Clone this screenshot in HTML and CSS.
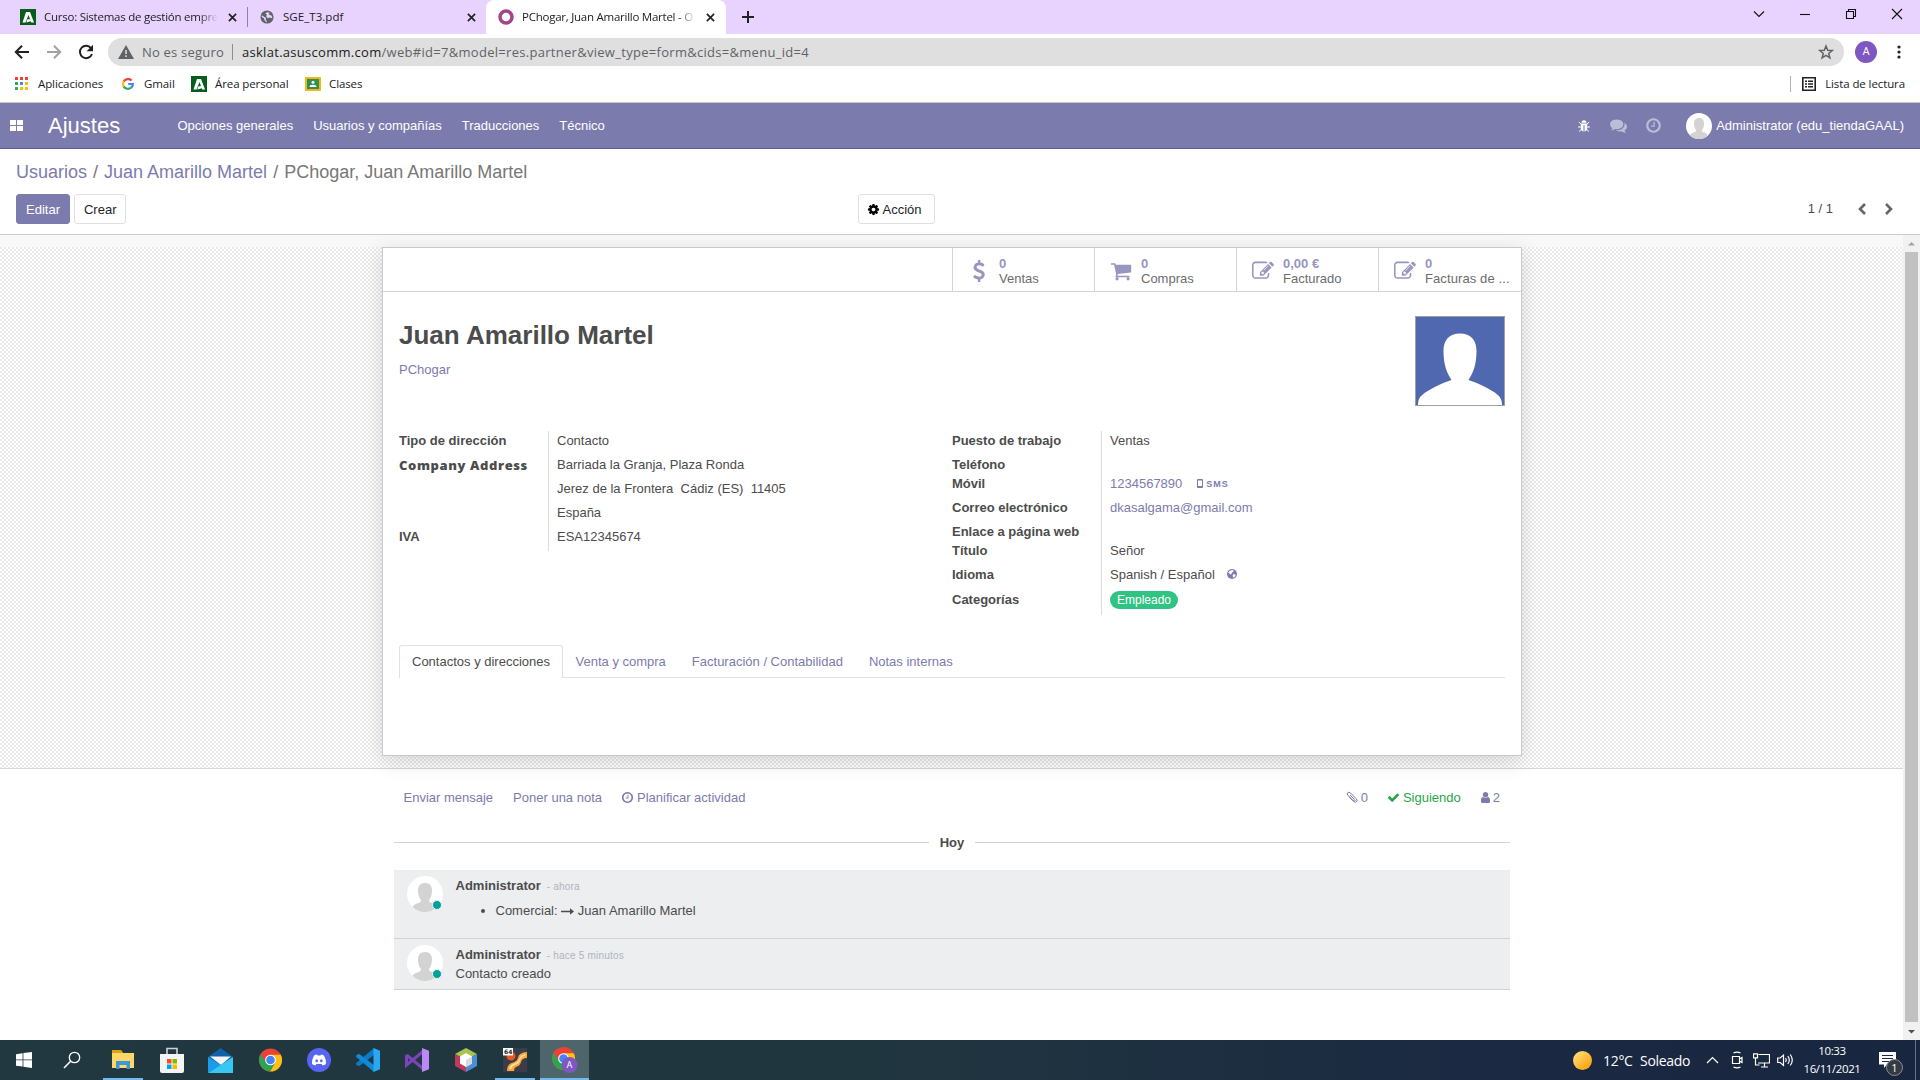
FILE: index.html
```html
<!DOCTYPE html>
<html lang="es">
<head>
<meta charset="utf-8">
<title>PChogar, Juan Amarillo Martel - Odoo</title>
<link rel="stylesheet" href="styles.css">
</head>
<body>
<svg class="defs" width="0" height="0">
  <symbol id="x" viewBox="0 0 10 10"><path d="M1 1l8 8M9 1l-8 8" stroke="#202124" stroke-width="1.9" fill="none"/></symbol>
  <symbol id="junta" viewBox="0 0 16 16"><path fill="#085d1c" d="M0 0h16v16H0z"/><path fill="#fff" d="M6 3h4l4 10.500h-2.800L8.500 6 5.500 13.500H2.500z"/><path fill="#fff" d="M7 10.500l3.500-.5 1 2-5 1.500z"/></symbol>
  <symbol id="globe" viewBox="0 0 16 16"><circle cx="8" cy="8" r="7.500" fill="#5f6368"/><path fill="#e8d3ff" d="M8 2.500l3 .5-1 2 3.500 1.500.5 3-3-1-2 1-2-2.500 1-2-2-1zM2 6l3 2 2 1-.5 2 1.500 2-1 1-2-2.500-.5-2L2 8z"/></symbol>
  <symbol id="clock" viewBox="0 0 1792 1792"><path d="M1024 544v448q0 14-9 23t-23 9h-320q-14 0-23-9t-9-23v-64q0-14 9-23t23-9h224v-352q0-14 9-23t23-9h64q14 0 23 9t9 23zm416 352q0-148-73-273t-198-198-273-73-273 73-198 198-73 273 73 273 198 198 273 73 273-73 198-198 73-273zm224 0q0 209-103 385.500t-279.500 279.500-385.500 103-385.500-103-279.500-279.500-103-385.500 103-385.500 279.500-279.500 385.500-103 385.500 103 279.500 279.500 103 385.500z"/></symbol>
  <symbol id="edit" viewBox="0 0 1792 1792"><path d="M888 1184l116-116-152-152-116 116v56h96v96h56zm440-720q-16-16-33 1l-350 350q-17 17-1 33t33-1l350-350q17-17 1-33zm80 594v190q0 119-84.500 203.500t-203.500 84.500h-832q-119 0-203.500-84.500t-84.500-203.500v-832q0-119 84.500-203.500t203.500-84.500h832q63 0 117 25 15 7 18 23 3 17-9 29l-49 49q-14 14-32 8-23-6-45-6h-832q-66 0-113 47t-47 113v832q0 66 47 113t113 47h832q66 0 113-47t47-113v-126q0-13 9-22l64-64q15-15 35-7t20 29zm-96-738l288 288-672 672h-288v-288zm444 132l-92 92-288-288 92-92q28-28 68-28t68 28l152 152q28 28 28 68t-28 68z"/></symbol>
  <symbol id="person" viewBox="0 0 36 36"><circle cx="18" cy="18" r="18" fill="#fff"/><path fill="#d3d3d3" d="M18 7c5 0 7.200 3.500 7 8-.2 4.500-1.500 7-3 9 0 2 1 2.500 4 3.500 2.500 1 3.500 2 4 3.500C26 35 22 36 18 36S10 35 5.500 31c.8-1.500 2-2.500 4.500-3.500 3-1 4-1.500 4-3.500-1.500-2-2.800-4.500-3-9-.2-4.500 2-8 7-8z"/></symbol>
  <symbol id="chrome" viewBox="0 0 24 24"><circle cx="12" cy="12" r="12" fill="#ea4335"/><path fill="#fbc116" d="M12 6.500h10.700A12 12 0 0 1 11.500 24l5-9z"/><path fill="#2da44e" d="M1.700 6A12 12 0 0 0 11.500 24l5.200-8.800-9.500-.4z"/><circle cx="12" cy="12" r="5.600" fill="#fff"/><circle cx="12" cy="12" r="4.500" fill="#4285f4"/></symbol>
</svg>

<header class="tabstrip">
  <div class="tab t1"><svg class="fav"><use href="#junta"/></svg><span class="tabname fade">Curso: Sistemas de gestión empre</span><svg class="close"><use href="#x"/></svg></div>
  <i class="tabsep"></i>
  <div class="tab t2"><svg class="fav small"><use href="#globe"/></svg><span class="tabname pdf">SGE_T3.pdf</span><svg class="close"><use href="#x"/></svg></div>
  <div class="tab t3"><svg class="fav" viewBox="0 0 16 16"><circle cx="8" cy="8" r="6" fill="none" stroke="#a24689" stroke-width="3.500"/></svg><span class="tabname fade">PChogar, Juan Amarillo Martel - O</span><svg class="close"><use href="#x"/></svg></div>
  <svg class="plus" viewBox="0 0 12 12"><path d="M6 0v12M0 6h12" stroke="#202124" stroke-width="2"/></svg>
  <div class="winbtns">
    <svg width="12" height="12" viewBox="0 0 12 12"><path d="M1 3.500l5 5 5-5"/></svg>
    <svg width="12" height="12" viewBox="0 0 12 12"><path d="M1 6.500h10"/></svg>
    <svg width="12" height="12" viewBox="0 0 12 12"><path d="M1.500 3.500h7v7h-7zM3.500 3.500v-2h7v7h-2"/></svg>
    <svg width="12" height="12" viewBox="0 0 12 12"><path d="M1 1l10 10M11 1L1 11"/></svg>
  </div>
</header>

<div class="toolbar">
  <svg class="nav" viewBox="0 0 16 16"><path d="M15 8H2M8 1.800L1.800 8 8 14.200" stroke="#202124"/></svg>
  <svg class="nav" viewBox="0 0 16 16"><path d="M1 8h13M8 1.800L14.200 8 8 14.200" stroke="#a0a1a4"/></svg>
  <svg class="nav" viewBox="0 0 16 16"><path d="M13.300 4.500A6.200 6.200 0 1 0 14 10" stroke="#202124"/><path d="M15 .8v6.400H8.600z" fill="#202124"/></svg>
  <div class="omni">
    <svg width="16" height="14" viewBox="0 0 16 14"><path fill="#5f6368" d="M8 0l8 14H0z"/><path stroke="#dfdfdf" stroke-width="1.500" d="M8 5v4M8 10.300v1.700"/></svg>
    <span class="unsafe">No es seguro</span><i></i>
    <span class="url"><b>asklat.asuscomm.com</b>/web#id=7&amp;model=res.partner&amp;view_type=form&amp;cids=&amp;menu_id=4</span>
    <svg class="star" width="16" height="16" viewBox="0 0 16 16"><path fill="none" stroke="#5f6368" stroke-width="1.500" d="M8 2l1.700 4.200 4.500.3-3.500 2.900 1.200 4.400L8 11.300l-3.900 2.500 1.200-4.400L1.800 6.500l4.500-.3z"/></svg>
  </div>
  <div class="profile">A</div>
  <svg class="dots" width="4" height="14" viewBox="0 0 4 14"><circle cx="2" cy="2" r="1.600"/><circle cx="2" cy="7" r="1.600"/><circle cx="2" cy="12" r="1.600"/></svg>
</div>

<div class="bookmarks">
  <svg class="bi apps" viewBox="0 0 13 13"><path fill="#ea4335" d="M0 0h3v3H0zM5 0h3v3H5zM10 0h3v3h-3z"/><path fill="#34a853" d="M0 5h3v3H0zM0 10h3v3H0z"/><path fill="#4285f4" d="M5 5h3v3H5z"/><path fill="#fbbc05" d="M10 5h3v3h-3zM5 10h3v3H5zM10 10h3v3h-3z"/></svg>
  <span class="b1">Aplicaciones</span>
  <svg class="bi goog" viewBox="0 0 12 12"><g fill="none" stroke-width="2.200"><path stroke="#ea4335" d="M1.700 3.600A4.900 4.900 0 0 1 9.600 2.600"/><path stroke="#fbbc05" d="M1.700 3.600a4.900 4.900 0 0 0 0 4.800"/><path stroke="#34a853" d="M1.700 8.400a4.900 4.900 0 0 0 7.400 1.300"/><path stroke="#4285f4" d="M9.100 9.700A4.900 4.900 0 0 0 10.900 6H6.200"/></g></svg>
  <span class="b2">Gmail</span>
  <svg class="bi"><use href="#junta"/></svg>
  <span class="b3">Área personal</span>
  <svg class="bi" viewBox="0 0 16 16"><rect y="1" width="16" height="14" rx="1" fill="#f2b810"/><path fill="#2f8f57" d="M2 3h12v10H2z"/><circle cx="8" cy="6.300" r="1.500" fill="#fff"/><path fill="#fff" d="M4.500 11q0-2.300 3.500-2.300t3.500 2.300z"/></svg>
  <span class="b4">Clases</span>
  <div class="reading"><svg width="14" height="14" viewBox="0 0 14 14"><path fill="none" stroke="#202124" stroke-width="1.600" d="M.8.800h12.400v12.400H.8z"/><path stroke="#202124" stroke-width="1.400" d="M3 4.200h2M6 4.200h5M3 7h2M6 7h5M3 9.800h2M6 9.800h5"/></svg><span>Lista de lectura</span></div>
</div>

<nav class="navbar">
  <svg class="grid" width="13" height="11" viewBox="0 0 13 11"><path fill="#fff" d="M0 0h6v5H0zM7 0h6v5H7zM0 6h6v5H0zM7 6h6v5H7z"/></svg>
  <span class="brand">Ajustes</span>
  <ul><li>Opciones generales</li><li>Usuarios y compañías</li><li>Traducciones</li><li>Técnico</li></ul>
  <div class="systray">
    <svg class="bug" width="12" height="12" viewBox="0 0 12 12"><path fill="#fff" d="M3.500 2.800a2.500 2.500 0 0 1 5 0zM2.800 3.500h6.400v4.800Q9 11.500 6 11.500T2.800 8.300z"/><path fill="none" stroke="#fff" d="M0 7h12M.8 2l2.500 2.300M11.200 2L8.700 4.300M1 11.500l2.500-2.300M11 11.500L8.500 9.200"/><path d="M6 5v6.500" stroke="#7c7bad"/></svg>
    <svg class="dim" width="17" height="17" viewBox="0 0 1792 1792"><path d="M1408 768q0 139-94 257t-256.500 186.500-353.500 68.500q-86 0-176-16-124 88-278 128-36 9-86 16h-3q-11 0-20.500-8t-11.500-21q-1-3-1-6.500t.5-6.500 2-6l2.500-5 3.500-5.500 4-5 4.500-5 4-4.500q5-6 23-25t26-29.500 22.500-29 25-38.500 20.500-44q-124-72-195-177t-71-224q0-139 94-257t256.500-186.500 353.500-68.500 353.500 68.500 256.500 186.500 94 257zm384 256q0 120-71 224.500t-195 176.500q10 24 20.500 44t25 38.500 22.500 29 26 29.500 23 25q1 1 4 4.500t4.500 5 4 5 3.500 5.500l2.500 5 2 6 .5 6.500-1 6.500q-3 14-13 22t-22 7q-50-7-86-16-154-40-278-128-90 16-176 16-271 0-472-132 58 4 88 4 161 0 309-45t264-129q125-92 192-212t67-254q0-77-23-152 129 71 204 178t75 230z"/></svg>
    <svg class="dim" width="17" height="17"><use href="#clock"/></svg>
    <svg class="me" width="26" height="26"><use href="#person"/></svg>
    <span>Administrator (edu_tiendaGAAL)</span>
  </div>
</nav>

<div class="control">
  <div class="crumbs"><a>Usuarios</a><i>/</i><a>Juan Amarillo Martel</a><i>/</i><span>PChogar, Juan Amarillo Martel</span></div>
  <div class="actions">
    <button class="btn primary">Editar</button><button class="btn">Crear</button>
    <button class="btn action"><svg width="13" height="13" viewBox="0 0 1792 1792"><path d="M1152 896q0-106-75-181t-181-75-181 75-75 181 75 181 181 75 181-75 75-181zm512-109v222q0 12-8 23t-20 13l-185 28q-19 54-39 91 35 50 107 138 10 12 10 25t-9 23q-27 37-99 108t-94 71q-12 0-26-9l-138-108q-44 23-91 38-16 136-29 186-7 28-36 28h-222q-14 0-24.500-8.500t-11.500-21.500l-28-184q-49-16-90-37l-141 107q-10 9-25 9-14 0-25-11-126-114-165-168-7-10-7-23 0-12 8-23 15-21 51-66.500t54-70.500q-27-50-41-99l-183-27q-13-2-21-12.500t-8-23.500v-222q0-12 8-23t19-13l186-28q14-46 39-92-40-57-107-138-10-12-10-24 0-10 9-23 26-36 98.500-107.500t94.500-71.500q13 0 26 10l138 107q44-23 91-38 16-136 29-186 7-28 36-28h222q14 0 24.500 8.500t11.500 21.500l28 184q49 16 90 37l142-107q9-9 24-9 13 0 25 10 129 119 165 170 7 8 7 22 0 12-8 23-15 21-51 66.500t-54 70.500q26 50 41 98l183 28q13 2 21 12.500t8 23.500z"/></svg>Acción</button>
    <div class="pager"><span>1 / 1</span><svg viewBox="0 0 10 12"><path d="M8 1L3 6l5 5"/></svg><svg viewBox="0 0 10 12"><path d="M2 1l5 5-5 5"/></svg></div>
  </div>
</div>

<div class="content">
  <main>
    <div class="sheetbg">
      <section class="sheet">
        <div class="stats">
          <div class="stat"><svg viewBox="0 0 1792 1792"><path d="M1362 1185q0 153-99.500 263.500t-258.500 136.500v175q0 14-9 23t-23 9h-135q-13 0-22.500-9.500t-9.500-22.500v-175q-66-9-127.500-31t-101.500-44.500-74-48-46.500-37.500-17.500-18q-17-21-2-41l103-135q7-10 23-12 15-2 24 9l2 2q113 99 243 125 37 8 74 8 81 0 142.500-43t61.500-122q0-28-15-53t-33.500-42-58.500-37.500-66-32-80-32.500q-39-16-61.500-25t-61.500-26.500-62.500-31-56.500-35.500-53.500-42.500-43.500-49-35.500-58-21-66.500-8.500-78q0-138 98-242t255-134v-180q0-13 9.500-22.500t22.500-9.500h135q14 0 23 9t9 23v176q57 6 110.500 23t87 33.500 63.500 37.500 39 29 15 14q17 18 5 38l-81 146q-8 15-23 16-14 3-27-7-3-3-14.500-12t-39-26.500-58.500-32-74.500-26-85.500-11.500q-95 0-155 43t-60 111q0 26 8.500 48t29.500 41.500 39.500 33 56 31 60.500 27 70 27.500q53 20 81 31.500t76 35 75.500 42.500 62 50 53 63.500 31.500 76.500 13 94z"/></svg><p><b>0</b><span>Ventas</span></p></div>
          <div class="stat"><svg viewBox="0 0 1792 1792"><path d="M704 1536q0 52-38 90t-90 38-90-38-38-90 38-90 90-38 90 38 38 90zm896 0q0 52-38 90t-90 38-90-38-38-90 38-90 90-38 90 38 38 90zm128-1088v512q0 24-16.500 42.500t-40.500 21.500l-1044 122q13 60 13 70 0 16-24 64h920q26 0 45 19t19 45-19 45-45 19h-1024q-26 0-45-19t-19-45q0-11 8-31.500t16-36 21.500-40 15.500-29.500l-177-823h-204q-26 0-45-19t-19-45 19-45 45-19h256q16 0 28.500 6.500t19.500 15.500 13 24.500 8 26 5.500 29.500 4.500 26h1201q26 0 45 19t19 45z"/></svg><p><b>0</b><span>Compras</span></p></div>
          <div class="stat"><svg><use href="#edit"/></svg><p><b>0,00 €</b><span>Facturado</span></p></div>
          <div class="stat last"><svg><use href="#edit"/></svg><p><b>0</b><span>Facturas de ...</span></p></div>
        </div>
        <div class="head">
          <div><h1>Juan Amarillo Martel</h1><a>PChogar</a></div>
          <svg class="photo" viewBox="0 0 88 88"><path fill="#4f68b0" d="M0 0h88v88H0z"/><path fill="#fff" d="M44 16.500c11 0 16.500 6.500 16.500 17.500 0 14-3.500 22-8 29C62 66 70 70 78 75c6 4 8 7 8 13H2c0-6 2-9 8-13 8-5 16-9 25.500-12-4.500-7-8-15-8-29 0-11 5.500-17.500 16.500-17.500z"/></svg>
        </div>
        <div class="groups">
          <div class="group g1">
            <div class="labels"><b>Tipo de dirección</b><b class="co">Company Address</b><b>IVA</b></div>
            <div class="values"><span>Contacto</span><span>Barriada la Granja, Plaza Ronda</span><span>Jerez de la Frontera&nbsp; Cádiz (ES)&nbsp; 11405</span><span>España</span><span>ESA12345674</span></div>
          </div>
          <div class="group g2">
            <div class="labels"><b>Puesto de trabajo</b><b class="short">Teléfono</b><b>Móvil</b><b>Correo electrónico</b><b class="short">Enlace a página web</b><b>Título</b><b class="lang">Idioma</b><b>Categorías</b></div>
            <div class="values"><span>Ventas</span><span class="short"></span><span class="phone"><a>1234567890</a><svg class="mob" width="6" height="9" viewBox="0 0 6 9"><path fill="none" stroke="#7c7bad" d="M.5.500h5v8h-5z"/><path stroke="#7c7bad" d="M1 1h4M1 7.500h4"/></svg><a class="sms">SMS</a></span><span><a>dkasalgama@gmail.com</a></span><span class="short"></span><span>Señor</span><span class="lang">Spanish / Español<svg class="glb" width="10" height="10" viewBox="0 0 16 16"><circle cx="8" cy="8" r="8" fill="#7c7bad"/><path fill="#fff" d="M8 1.500l3 1-1 1.500L8 6 6 9 4 7 2 6l2-3zM10 8l4 1-1 3-3 2-1-3z"/></svg></span><span><em class="tag">Empleado</em></span></div>
          </div>
        </div>
        <div class="tabs"><span class="on">Contactos y direcciones</span><span>Venta y compra</span><span>Facturación / Contabilidad</span><span>Notas internas</span></div>
      </section>
    </div>
    <section class="chatter">
      <div class="topbar"><a class="c1">Enviar mensaje</a><a class="c2">Poner una nota</a><a class="c3"><svg width="13" height="13"><use href="#clock"/></svg>Planificar actividad</a>
        <div class="follow"><a><svg width="12" height="12" viewBox="0 0 12 12"><path fill="none" stroke="#7c7bad" stroke-width="1" d="M4 4l4.500 4.500q1 .8.300 1.500t-1.500-.3L2 4.400Q.6 2.800 1.700 1.700t2.700.2l5.800 5.800q1.600 1.800.4 3t-3-.3L3 5.800"/></svg>0</a><a class="ok"><svg width="13" height="13" viewBox="0 0 1792 1792"><path d="M1671 566q0 40-28 68l-724 724-136 136q-28 28-68 28t-68-28l-136-136-362-362q-28-28-28-68t28-68l136-136q28-28 68-28t68 28l294 295 656-657q28-28 68-28t68 28l136 136q28 28 28 68z"/></svg>Siguiendo</a><a><svg class="usr" width="13" height="13" viewBox="128 0 1536 1792"><path d="M1536 1399q0 109-62.500 187t-150.500 78h-854q-88 0-150.500-78t-62.500-187q0-85 8.500-160.500t31.500-152 58.500-131 94-89 134.500-34.500q131 128 313 128t313-128q76 0 134.500 34.500t94 89 58.500 131 31.500 152 8.500 160.500zm-256-887q0 159-112.500 271.500t-271.500 112.500-271.500-112.500-112.500-271.500 112.500-271.500 271.500-112.500 271.500 112.500 112.500 271.500z"/></svg>2</a></div>
      </div>
      <div class="day">Hoy</div>
      <article class="msg m1">
        <div class="av"><svg width="36" height="36"><use href="#person"/></svg><i></i></div>
        <div><p><b>Administrator</b><small>- ahora</small></p><ul><li>Comercial: <svg width="13" height="7" viewBox="0 0 13 7"><path d="M0 2.800h9V.3L13 3.500 9 6.700V4.200H0z" fill="#4c4c4c"/></svg> Juan Amarillo Martel</li></ul></div>
      </article>
      <article class="msg m2">
        <div class="av"><svg width="36" height="36"><use href="#person"/></svg><i></i></div>
        <div><p><b>Administrator</b><small>- hace 5 minutos</small></p><p class="txt">Contacto creado</p></div>
      </article>
    </section>
  </main>
  <aside class="scroll"><svg viewBox="0 0 17 17"><path fill="#a3a3a3" d="M5 10.500h7L8.500 7z"/></svg><div></div><svg viewBox="0 0 17 17"><path fill="#505050" d="M5 7h7l-3.500 3.500z"/></svg></aside>
</div>

<footer class="taskbar">
  <div class="app start"><svg width="16" height="16" viewBox="0 0 16 16"><path fill="#fff" d="M0 2.200L6.600 1.200v6.300H0zM7.400 1.100L16 0v7.500H7.400zM0 8.300h6.600v6.300L0 13.700zM7.400 8.300H16V16l-8.600-1.200z"/></svg></div>
  <div class="app find"><svg width="18" height="18" viewBox="0 0 18 18"><circle cx="11.500" cy="6.500" r="5.200" fill="none" stroke="#fff" stroke-width="1.300"/><path d="M7.600 10.300L1 17" stroke="#fff" stroke-width="1.500"/></svg></div>
  <div class="app run"><svg width="22" height="20" viewBox="0 0 22 20"><path fill="#e0a115" d="M0 0h9l2 2.500V6H0z"/><path fill="#ffd767" d="M0 3h22v15H0z"/><path fill="#3a96dd" d="M4 11h14v8h-3.500v-4h-7v4H4z"/></svg></div>
  <div class="app"><svg width="24" height="26" viewBox="0 0 24 26"><path d="M7 7V1.500h10V7" fill="none" stroke="#cfd3d5" stroke-width="1.600"/><path fill="#f4f4f4" d="M0 7h24v17q0 2-2 2H2q-2 0-2-2z"/><path fill="#f25022" d="M7 12h4.500v4.500H7z"/><path fill="#7fba00" d="M12.500 12H17v4.500h-4.500z"/><path fill="#00a4ef" d="M7 17.500h4.500V22H7z"/><path fill="#ffb900" d="M12.500 17.500H17V22h-4.500z"/></svg></div>
  <div class="app"><svg width="25" height="25" viewBox="0 0 25 25"><path fill="#0d62ab" d="M0 9L12.500 0 25 9v8H0z"/><path fill="#f5f5f5" d="M2 8.500h21L13 17z"/><path fill="#1c9ce8" d="M0 9l13 8-13 8z"/><path fill="#38c7f3" d="M25 9v16H0z"/></svg></div>
  <div class="app"><svg width="23" height="26"><use href="#chrome"/></svg></div>
  <div class="app"><svg width="24" height="24" viewBox="0 0 24 24"><circle cx="12" cy="12" r="12" fill="#5865f2"/><path fill="#fff" d="M7 7.500Q9 6.500 10 6.500l.6 1h2.800l.6-1q1 0 3 1Q19.500 12 19 16q-1.700 1.300-3.500 1.500l-.8-1.500H9.300l-.8 1.500Q6.700 17.300 5 16q-.5-4 2-8.500z"/><ellipse cx="9.700" cy="12.800" rx="1.300" ry="1.500" fill="#5865f2"/><ellipse cx="14.300" cy="12.800" rx="1.300" ry="1.500" fill="#5865f2"/></svg></div>
  <div class="app"><svg width="24" height="24" viewBox="0 0 24 24"><path fill="#0a7bc9" d="M18 0v7L3 18.300 0 16.500v-1.200z"/><path fill="#0e8ad8" d="M18 24v-7L3 5.700 0 7.500v1.200z"/><path fill="#2aa9f2" d="M17.500 0L24 2.800v18.400L17.500 24z"/></svg></div>
  <div class="app"><svg width="24" height="24" viewBox="0 0 24 24"><path fill="none" stroke="#7a45b8" stroke-width="3" d="M1.500 7v10L18 3.500M1.500 7L18 20.500"/><path fill="#b98af5" d="M17 0l7 2.800v18.400L17 24z"/></svg></div>
  <div class="app"><svg width="22" height="24" viewBox="0 0 22 24"><path fill="#a8c64b" d="M11 0l11 6-11 6L0 6z"/><path fill="#c0395b" d="M0 6l11 6v12L0 18z"/><path fill="#4a8fd6" d="M22 6l-11 6v12l11-6z"/><path fill="#fff" d="M11 5l6 3.500v7L11 19l-6-3.500v-7z"/><path fill="#d6dadc" d="M11 12l6-3.500v7L11 19z"/></svg></div>
  <div class="app run"><svg width="24" height="24" viewBox="0 0 24 24"><path fill="#3a3d47" d="M0 0h24v24H0z"/><circle cx="8" cy="8" r="4.500" fill="#e8571c"/><path fill="#ffa53a" d="M4 23q0-7 6-8.500 4-1 5-5 1-5 9-5.500v6q-5 0-6 4-1 4-5 5-2 .7-2 4z"/><path fill="#ffe0a0" d="M6 21q1-4.500 5-5.500 4-1 5.500-5.500 1-3 6-4v1.500q-4 1-5 4-1.500 4.500-5.500 5.500-3 1-3.500 4z"/><path fill="#fff" d="M0 0h10v7.500H0z"/><text x="1" y="6" class="badge64">64</text></svg></div>
  <div class="app run current"><svg width="26" height="26" viewBox="0 0 26 26"><use href="#chrome" width="23" height="23" x="0" y="0"/><circle cx="17.500" cy="18" r="8" fill="#7e57c2"/><text x="17.500" y="21.300" text-anchor="middle" class="badgeA">A</text></svg></div>
  <div class="tray">
    <i class="sun"></i><span class="temp">12°C</span><span class="sol">Soleado</span>
    <svg class="up" width="13" height="8" viewBox="0 0 13 8"><path d="M1 7l5.500-5.500L12 7"/></svg>
    <svg class="cam" width="12" height="18" viewBox="0 0 12 18"><path d="M1.500 5.500h7v7h-7zM8.500 8l2.500-1.500v5L8.500 10M2.500 2Q6 .2 9.500 2M2.500 16q3.500 1.800 7 0"/></svg>
    <svg class="net" width="17" height="15" viewBox="0 0 17 15"><path d="M5.500 1.500h11v8.500H5M8 14h7M11.500 10v4M.5.800h4v4h-4zM2.500 5v7h4"/></svg>
    <svg class="vol" width="17" height="14" viewBox="0 0 17 14"><path d="M.7 5h2.500L6.500 2v10.500L3.200 9.500H.7zM8.500 5q1.500 2 0 4M10.800 3.200q3 4 0 7.800M13.200 1.500q4.200 5.500 0 11"/></svg>
    <div class="time"><span>10:33</span><span>16/11/2021</span></div>
    <div class="note"><svg width="17" height="16" viewBox="0 0 17 16"><path fill="#fff" d="M0 0h17v12.500H8L5 16v-3.500H0z"/><path stroke="#1a2842" d="M3 3.500h11M3 6.500h11M3 9.500h7"/></svg><b>1</b></div>
    <i class="peek"></i>
  </div>
</footer>
</body>
</html>
```
FILE: styles.css
```css
* { box-sizing: border-box; }
body { margin: 0; width: 1920px; height: 1080px; overflow: hidden; display: flex; flex-direction: column; background: #fff; font: 13px/15px "Liberation Sans", Arial, sans-serif; color: #4c4c4c; }
p, ul, h1 { margin: 0; padding: 0; }
svg { display: block; flex: none; }
.defs { position: absolute; }
a { color: #7c7bad; }

.tabstrip, .toolbar, .bookmarks { font-family: "Open Sans", "Noto Sans", sans-serif; color: #202124; flex: none; display: flex; align-items: center; }
.tabstrip { height: 34px; background: #e8d3ff; font-size: 11.5px; letter-spacing: -.25px; }
.tab { display: flex; align-items: center; height: 34px; }
.t1 { width: 247px; padding: 0 10px 0 20px; }
.t2 { width: 238px; padding: 0 10px 0 12px; }
.t3 { width: 240px; padding: 0 11px 0 12px; background: #fff; border-radius: 8px 8px 0 0; }
.fav { width: 16px; height: 16px; margin-right: 8px; }
.fav.small { width: 14px; height: 14px; margin-right: 9px; }
.tabname { flex: 1; white-space: nowrap; margin-top: -2px; }
.pdf { letter-spacing: .05px; }
.fade { flex: none; width: 175px; -webkit-mask-image: linear-gradient(90deg, #000 155px, transparent 174px); mask-image: linear-gradient(90deg, #000 155px, transparent 174px); }
.close { width: 9px; height: 9px; margin-left: auto; }
.tabsep { width: 1px; height: 20px; background: #8f819e; }
.plus { width: 12px; height: 12px; margin-left: 16px; }
.winbtns { margin-left: auto; display: flex; gap: 34px; padding: 0 17px 6px 0; }
.winbtns svg { fill: none; stroke: #111; stroke-width: 1.1; }

.toolbar { height: 35px; padding: 1px 19px 0 14px; }
.nav { width: 16px; height: 16px; margin-right: 16px; fill: none; stroke-width: 2; }
.omni { width: 1736px; height: 28px; margin-left: -2px; border-radius: 14px; background: #dfdfdf; display: flex; align-items: center; padding: 0 10px 0 10px; font-size: 13px; color: #5f6368; }
.unsafe { margin-left: 8px; width: 82px; white-space: nowrap; letter-spacing: .2px; }
.url { letter-spacing: .29px; white-space: nowrap; }
.omni i { width: 1px; height: 16px; background: #8b8d90; margin: 0 9px 0 8px; }
.omni b { font-weight: 400; color: #202124; }
.star { margin-left: auto; }
.profile { width: 22px; height: 22px; border-radius: 50%; margin-left: 11px; background: #7e57c2; color: #fff; font: 11px/22px Roboto, sans-serif; text-align: center; }
.dots { margin-left: auto; fill: #202124; }

.bookmarks { height: 34px; padding: 0 15px 4px 15px; font-size: 11.5px; letter-spacing: -.1px; border-bottom: 1px solid #c8c8c8; white-space: nowrap; }
.bi { width: 16px; height: 16px; margin-right: 8px; }
.apps { width: 13px; height: 13px; margin-right: 10px; }
.goog { width: 12px; height: 12px; margin-right: 10px; }
.b1 { width: 84px; } .b2 { width: 47px; } .b3 { width: 90px; }
.reading { margin-left: auto; padding-left: 11px; border-left: 1px solid #b5b5b5; display: flex; align-items: center; gap: 9px; height: 16px; }

.navbar { height: 46px; flex: none; background: #7c7bad; border-bottom: 1px solid #5f5e97; color: #fff; display: flex; align-items: center; padding: 0 16px 0 10px; }
.brand { font-size: 22px; line-height: 26px; margin: 0 0 0 25px; width: 129.500px; }
.navbar ul { display: flex; list-style: none; gap: 20px; }
.systray { margin-left: auto; display: flex; align-items: center; }
.dim { fill: #bebdd7; }
.bug { margin-right: 20px; }
.dim { margin-right: 18px; }
.me { margin: 0 4px 0 6px; }

.control { height: 86px; flex: none; border-bottom: 1px solid #ccc; padding: 13px 16px 0; }
.crumbs { font-size: 18px; line-height: 21px; color: #777; }
.crumbs i { font-style: normal; padding: 0 6px; }
.actions { display: flex; align-items: center; margin-top: 11px; height: 30px; }
.btn { height: 30px; border: 1px solid #dee0e3; border-radius: 3px; background: #fff; font: 13px/15px "Liberation Sans", Arial, sans-serif; color: #212529; padding: 0 9px; margin: 0 4px 0 0; }
.primary { background: #7c7bad; border-color: #7c7bad; color: #fff; }
.action { margin-left: 728px; width: 77px; display: flex; align-items: center; gap: 2px; padding: 0 8px; }
.pager { margin-left: auto; display: flex; align-items: center; padding-right: 10px; }
.pager svg { width: 10px; height: 12px; fill: none; stroke: #666; stroke-width: 2.6; margin-left: 17px; }
.pager span { margin: -2px 7px 0 0; }

.content { flex: 1; display: flex; min-height: 0; }
main { flex: 1; padding-top: 12px; background: linear-gradient(#f8f8f8 12px, #fff 12px); }
.sheetbg { height: 522px; border-bottom: 1px solid #d6d6d6; padding: 0 381px 0 382px; background: repeating-conic-gradient(#fff 0 25%, #e9e9e9 0 50%) 0 0 / 4px 4px; }
.sheet { height: 509px; border: 1px solid #c8c8d3; background: #fff; box-shadow: 0 5px 20px rgba(0,0,0,.14); }
.stats { height: 44px; border-bottom: 1px solid #d3d3dd; display: flex; justify-content: flex-end; }
.stat { width: 142px; border-left: 1px solid #d3d3dd; display: flex; align-items: center; padding: 2px 0 0 14px; color: #6c6c6c; white-space: nowrap; }
.stat.last { width: 143px; }
.stat svg { width: 24px; height: 24px; fill: #9796be; margin-right: 8px; padding: 1px; }
.stat b, .stat span { display: block; }
.stat b { color: #9796be; }
.last span { letter-spacing: .1px; }
.head { display: flex; justify-content: space-between; padding: 24px 16px 0 16px; height: 139px; }
h1 { font-size: 26px; line-height: 38px; margin-bottom: 8px; }
.photo { width: 90px; height: 90px; border: 1px solid #a0a0a0; }
.groups { display: flex; padding-left: 16px; height: 214px; line-height: 20px; align-items: flex-start; }
.group { display: flex; width: 553px; }
.labels { width: 150px; border-right: 1px solid #ddd; }
.group b, .values span { display: block; height: 24px; white-space: nowrap; }
.values { padding-left: 8px; }
.labels .co { height: 72px; font-family: "Open Sans", sans-serif; font-weight: 800; font-size: 13px; letter-spacing: .6px; }
.group .short { height: 19px; }
.group .lang { height: 25px; }
.values .lang { display: flex; }
.values .phone { display: flex; align-items: flex-start; }
.mob { margin: 5px 3px 0 15px; }
.sms { font-size: 9px; font-weight: bold; letter-spacing: 1px; }
.glb { margin: 4px 0 0 12px; }
.tag { display: block; width: max-content; font-style: normal; background: #30c381; color: #fff; font-size: 12px; line-height: 18px; height: 18px; border-radius: 9px; padding: 0 7px; margin-top: 1px; }
.g1 { height: 120px; } .g2 { height: 184px; }
.tabs { margin: 0 16px 0 16px; height: 33px; border-bottom: 1px solid #dee2e6; display: flex; color: #7c7bad; }
.tabs span { height: 33px; line-height: 33px; padding: 0 13px; }
.tabs .on { color: #4c4c4c; background: #fff; border: 1px solid #dee2e6; border-bottom: 0; border-radius: 3px 3px 0 0; padding: 0 12px; line-height: 31px; margin-right: -.5px; }

.chatter { margin: 0 393px 0 394px; }
.topbar { display: flex; align-items: center; height: 56px; padding: 0 10px 0 9.500px; }
.topbar a { display: flex; align-items: center; }
.topbar svg { fill: currentColor; margin-right: 3px; }
.c1, .c2 { margin-right: 20px; }
.topbar .c2 { margin-right: 19px; }
.follow { margin-left: auto; display: flex; gap: 19px; }
.follow .ok { color: #28a745; }
.topbar .usr { width: 11px; margin-right: 2px; }
.day { display: flex; align-items: center; gap: 11px; height: 34px; font-weight: bold; margin-bottom: 11px; }
.day::before, .day::after { content: ""; flex: 1; height: 1px; background: #ced4da; }
.msg { display: flex; background: #eceef0; border-bottom: 1px solid #ced4da; padding: 6px 13px 0; line-height: 19px; }
.m1 { height: 69px; } .m2 { height: 51px; }
.av { width: 48.500px; position: relative; }
.av i { position: absolute; left: 25px; top: 24px; width: 10px; height: 10px; border-radius: 50%; background: #00a09d; border: 1px solid #eceef0; }
.msg small { font-size: 10px; color: #adb5bd; margin-left: 6px; letter-spacing: .2px; }
.msg ul { padding: 5px 0 0 40px; }
.msg li svg { display: inline-block; }
.msg .txt { margin-top: -1px; }

.scroll { width: 17px; background: #f1f1f1; display: flex; flex-direction: column; }
.scroll svg { width: 17px; height: 17px; }
.scroll div { flex: 1; margin: 0 2px 1px; background: #c1c1c1; }

.taskbar { height: 40px; flex: none; background: linear-gradient(90deg, #213840 0, #20363f 45%, #1a2842 80%, #192640); display: flex; font-family: "Open Sans", "Noto Sans", sans-serif; color: #fff; }
.app { width: 49.1px; height: 40px; display: flex; align-items: center; justify-content: center; }
.start { padding-right: 1px; }
.find { padding-right: 3px; }
.run { background: linear-gradient(#76b9ed, #76b9ed) center bottom / 40px 2px no-repeat; }
.current { background: linear-gradient(#76b9ed, #76b9ed) center bottom / 100% 2px no-repeat, #4f656c; }
.badge64 { font: bold 6px "DejaVu Sans", sans-serif; fill: #222; }
.badgeA { font: 9px Roboto, sans-serif; fill: #fff; }
.tray { margin-left: auto; display: flex; align-items: center; font-size: 14px; }
.tray svg { fill: none; stroke: #fff; stroke-width: 1.2; }
.sun { width: 19px; height: 19px; border-radius: 50%; background: linear-gradient(135deg, #ffe680, #f90); margin-right: 11px; }
.temp { width: 37px; white-space: nowrap; letter-spacing: -.3px; }
.sol { width: 66px; letter-spacing: -.3px; }
.tray .up { margin-right: 12px; }
.tray .cam { margin-right: 10px; }
.tray .net { margin-right: 7px; }
.tray .vol { margin-right: 9px; }
.time { display: flex; flex-direction: column; align-items: center; width: 58px; font-size: 11.5px; line-height: 18px; letter-spacing: -.4px; }
.note { position: relative; margin-left: 18px; width: 36px; height: 16px; }
.note svg { stroke: none; }
.note b { position: absolute; left: 7px; top: 7px; width: 17px; height: 17px; border-radius: 50%; background: #333a44; border: 1px solid #8a8f98; font: 11px/15px "Open Sans", sans-serif; text-align: center; }
.peek { width: 1px; height: 40px; background: #6a7386; margin-right: 4px; }
```
